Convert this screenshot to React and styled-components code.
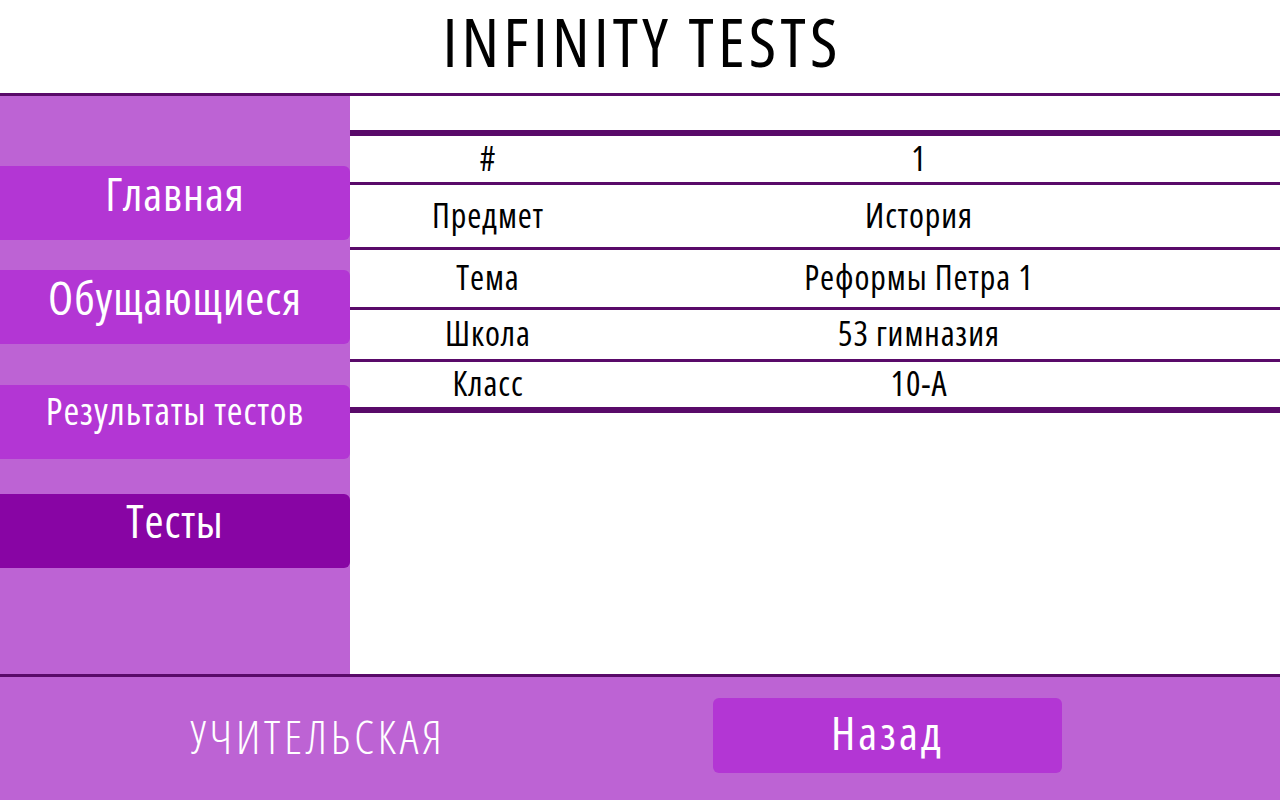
import React from "react";
import styled, { createGlobalStyle } from "styled-components";

const GlobalStyle = createGlobalStyle`
  html, body { margin: 0; padding: 0; background: #ffffff; }
  body {
    font-family: "Open Sans", "DejaVu Sans", sans-serif;
    font-stretch: 75%;
    letter-spacing: 0.058em;
  }
  #root { width: 1280px; height: 800px; }
`;

const Page = styled.div`
  width: 1280px;
  height: 800px;
  display: flex;
  flex-direction: column;
  overflow: hidden;
`;

const Header = styled.header`
  height: 93px;
  flex-shrink: 0;
  border-bottom: 3px solid #590a69;
  display: flex;
  align-items: center;
  justify-content: center;
  background: #ffffff;
`;

const Title = styled.h1`
  margin: 0;
  font-family: "Open Sans", sans-serif;
  font-stretch: 75%;
  font-weight: 400;
  font-size: 67px;
  letter-spacing: 0.062em;
  line-height: 1.2;
  color: #000;
  padding: 0 0 10px 4px;
  white-space: nowrap;
`;

const Main = styled.div`
  flex: 1;
  display: flex;
  min-height: 0;
`;

const Sidebar = styled.nav`
  width: 350px;
  background: #bd63d4;
  display: flex;
  flex-direction: column;
  padding-top: 70px;
  box-sizing: border-box;
`;

const NavButton = styled.div`
  height: 74px;
  flex-shrink: 0;
  margin-top: ${(p) => p.$gap || 0}px;
  border-radius: 0 6px 6px 0;
  background: ${(p) => (p.$active ? "#8805a4" : "#b336d4")};
  color: #ffffff;
  display: flex;
  justify-content: center;
  align-items: center;
  font-size: ${(p) => p.$size || 46}px;
  padding-bottom: ${(p) => p.$lift || 18}px;
  box-sizing: border-box;
  line-height: 1.2;
  white-space: nowrap;
`;

const Content = styled.section`
  flex: 1;
  background: #ffffff;
  padding-top: 34px;
`;

const Table = styled.div`
  border-top: 6px solid #590a69;
  border-bottom: 6px solid #590a69;
`;

const Row = styled.div`
  display: grid;
  grid-template-columns: 276px 586px 1fr;
  height: ${(p) => p.$h}px;
  align-items: center;
  border-top: ${(p) => (p.$first ? "none" : "3px solid #590a69")};
  font-size: 34px;
  color: #000;
  line-height: 1.2;
`;

const Cell = styled.div`
  text-align: center;
  padding-bottom: 2px;
  white-space: nowrap;
`;

const Footer = styled.footer`
  height: 126px;
  flex-shrink: 0;
  border-top: 3px solid #590a69;
  background: #bd63d4;
  display: grid;
  grid-template-columns: 636px 349px;
  column-gap: 77px;
  align-items: start;
  padding-top: 21px;
  box-sizing: border-box;
`;

const FooterLabel = styled.div`
  height: 75px;
  display: flex;
  align-items: center;
  justify-content: center;
  color: #ffffff;
  font-size: 46px;
  font-weight: 350;
  letter-spacing: 0.085em;
  line-height: 1.2;
  padding-top: 3px;
  box-sizing: border-box;
  white-space: nowrap;
`;

const BackButton = styled.div`
  height: 75px;
  border-radius: 6px;
  background: #b336d4;
  color: #ffffff;
  display: flex;
  align-items: center;
  justify-content: center;
  font-size: 46px;
  letter-spacing: 0.065em;
  line-height: 1.2;
  padding-bottom: 6px;
  box-sizing: border-box;
`;

const rows = [
  { k: "#", v: "1", h: 46 },
  { k: "Предмет", v: "История", h: 62 },
  { k: "Тема", v: "Реформы Петра 1", h: 57 },
  { k: "Школа", v: "53 гимназия", h: 49 },
  { k: "Класс", v: "10-А", h: 45 },
];

export default function App() {
  return (
    <Page>
      <GlobalStyle />
      <Header>
        <Title>INFINITY TESTS</Title>
      </Header>
      <Main>
        <Sidebar>
          <NavButton>Главная</NavButton>
          <NavButton $gap={30}>Обущающиеся</NavButton>
          <NavButton $gap={41} $size={38} $lift={22}>
            Результаты тестов
          </NavButton>
          <NavButton $gap={35} $active $lift={21}>
            Тесты
          </NavButton>
        </Sidebar>
        <Content>
          <Table>
            {rows.map((r, i) => (
              <Row key={r.k} $h={r.h} $first={i === 0}>
                <Cell>{r.k}</Cell>
                <Cell>{r.v}</Cell>
              </Row>
            ))}
          </Table>
        </Content>
      </Main>
      <Footer>
        <FooterLabel>УЧИТЕЛЬСКАЯ</FooterLabel>
        <BackButton>Назад</BackButton>
      </Footer>
    </Page>
  );
}
